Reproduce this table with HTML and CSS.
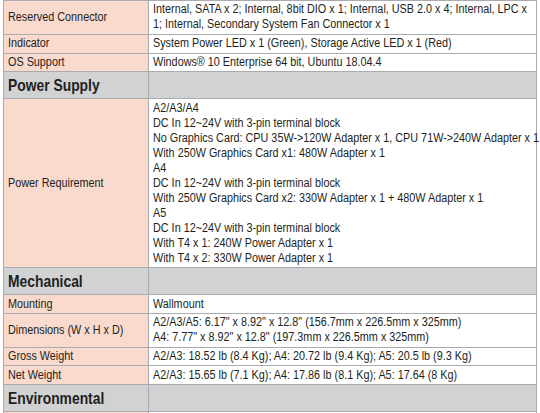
FILE: index.html
```html
<!DOCTYPE html>
<html>
<head>
<meta charset="utf-8">
<link rel="stylesheet" href="styles.css">
</head>
<body>
<table class="spec">
  <colgroup><col class="c-label"><col class="c-value"></colgroup>
  <tr>
    <td class="label"><div class="t">Reserved Connector</div></td>
    <td class="value"><div class="t">Internal, SATA x 2; Internal, 8bit DIO x 1; Internal, USB 2.0 x 4; Internal, LPC x 1; Internal, Secondary System Fan Connector x 1</div></td>
  </tr>
  <tr>
    <td class="label"><div class="t">Indicator</div></td>
    <td class="value"><div class="t">System Power LED x 1 (Green), Storage Active LED x 1 (Red)</div></td>
  </tr>
  <tr>
    <td class="label"><div class="t">OS Support</div></td>
    <td class="value"><div class="t">Windows® 10 Enterprise 64 bit, Ubuntu 18.04.4</div></td>
  </tr>
  <tr class="section">
    <td class="label"><div class="t">Power Supply</div></td>
    <td class="value"></td>
  </tr>
  <tr class="tall">
    <td class="label"><div class="t">Power Requirement</div></td>
    <td class="value"><div class="t nowrap">A2/A3/A4<br>DC In 12~24V with 3-pin terminal block<br>No Graphics Card: CPU 35W-&gt;120W Adapter x 1, CPU 71W-&gt;240W Adapter x 1<br>With 250W Graphics Card x1: 480W Adapter x 1<br>A4<br>DC In 12~24V with 3-pin terminal block<br>With 250W Graphics Card x2: 330W Adapter x 1 + 480W Adapter x 1<br>A5<br>DC In 12~24V with 3-pin terminal block<br>With T4 x 1: 240W Power Adapter x 1<br>With T4 x 2: 330W Power Adapter x 1</div></td>
  </tr>
  <tr class="section">
    <td class="label"><div class="t">Mechanical</div></td>
    <td class="value"></td>
  </tr>
  <tr>
    <td class="label"><div class="t">Mounting</div></td>
    <td class="value"><div class="t">Wallmount</div></td>
  </tr>
  <tr>
    <td class="label"><div class="t">Dimensions (W x H x D)</div></td>
    <td class="value"><div class="t">A2/A3/A5: 6.17" x 8.92" x 12.8" (156.7mm x 226.5mm x 325mm)<br>A4: 7.77" x 8.92" x 12.8" (197.3mm x 226.5mm x 325mm)</div></td>
  </tr>
  <tr>
    <td class="label"><div class="t">Gross Weight</div></td>
    <td class="value"><div class="t">A2/A3: 18.52 lb (8.4 Kg); A4: 20.72 lb (9.4 Kg); A5: 20.5 lb (9.3 Kg)</div></td>
  </tr>
  <tr>
    <td class="label"><div class="t">Net Weight</div></td>
    <td class="value"><div class="t">A2/A3: 15.65 lb (7.1 Kg); A4: 17.86 lb (8.1 Kg); A5: 17.64 (8 Kg)</div></td>
  </tr>
  <tr class="section">
    <td class="label"><div class="t">Environmental</div></td>
    <td class="value"></td>
  </tr>
  <tr class="hidden-row">
    <td class="label"></td>
    <td class="value"></td>
  </tr>
</table>
</body>
</html>
```

FILE: styles.css
```css
html, body {
  margin: 0;
  padding: 0;
  background: #ffffff;
  overflow: hidden;
}

body {
  padding: 0 0 0 3px;
  font-family: "Liberation Sans", Arial, sans-serif;
  font-size: 12.5px;
  color: #231f20;
}

.spec {
  border-collapse: collapse;
  width: 534px;
  table-layout: fixed;
  margin-top: 0;
}

.c-label { width: 145px; }

.spec td {
  border: 1px solid #a9abae;
  padding: 1.4px 4px;
  line-height: 15px;
  vertical-align: middle;
  text-align: left;
}

.spec .t {
  width: calc(100% / 0.865);
  transform: scaleX(0.865);
  transform-origin: 0 0;
}

.spec .nowrap {
  white-space: nowrap;
}

.spec td.label {
  background: #f9dacd;
}

.spec td.value {
  background: #ffffff;
}

.spec tr.section td {
  background: #d1d2d4;
  font-weight: bold;
  font-size: 16.5px;
  height: 26px;
  padding-top: 0;
  padding-bottom: 0;
  line-height: 20px;
}

.spec tr.section .t {
  width: calc(100% / 0.84);
  transform: scaleX(0.84);
}

.spec tr.hidden-row td {
  height: 18px;
}
```
